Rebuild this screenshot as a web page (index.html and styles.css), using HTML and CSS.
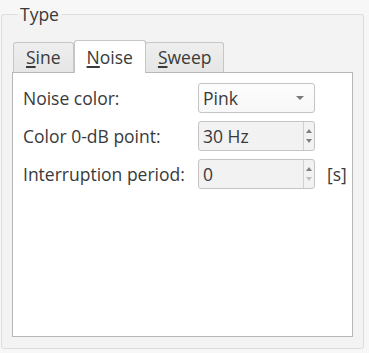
FILE: index.html
```html
<!DOCTYPE html>
<html lang="en">
<head>
    <meta charset="UTF-8">
    <title>Signal generator</title>
    <link rel="stylesheet" href="styles.css">
</head>
<body>
    <fieldset class="group">
        <legend class="group-title">Type</legend>

        <!-- tabs -->
        <div class="tab-bar">
            <div class="tab"><u>S</u>ine</div>
            <div class="tab tab-active"><u>N</u>oise</div>
            <div class="tab"><u>S</u>weep</div>
        </div>

        <div class="tab-pane">
            <div class="form">
                <label class="form-label">Noise color:</label>
                <div class="combo">
                    <span class="combo-text">Pink</span>
                    <span class="combo-arrow"></span>
                </div>
                <span></span>

                <label class="form-label">Color 0-dB point:</label>
                <div class="spin">
                    <span class="spin-text">30 Hz</span>
                    <span class="spin-buttons">
                        <span class="arrow-up"></span>
                        <span class="arrow-down"></span>
                    </span>
                </div>
                <span></span>

                <label class="form-label">Interruption period:</label>
                <div class="spin">
                    <span class="spin-text">0</span>
                    <span class="spin-buttons">
                        <span class="arrow-up"></span>
                        <span class="arrow-down disabled"></span>
                    </span>
                </div>
                <span class="unit">[s]</span>
            </div>
        </div>
    </fieldset>
</body>
</html>
```

FILE: styles.css
```css
body {
    margin: 0;
    background-color: #f7f7f7;
    font-family: "Open Sans", "Noto Sans", sans-serif;
    font-size: 17.5px;
    color: #3a3a3a;
}

.group {
    margin: 5px 0 0 1px;
    width: 363px;
    height: 344px;
    min-width: 0;
    box-sizing: border-box;
    padding: 15px 10px 12px 10px;
    border: 1px solid #dcdcdc;
    border-radius: 3px;
    background-color: #f3f3f3;
}

.group-title {
    margin-left: 6px;
    padding: 0 3px 0 2px;
    line-height: 19px;
}

.tab-bar {
    display: flex;
    align-items: flex-end;
    padding-left: 1px;
    height: 33px;
}

.tab {
    height: 29px;
    line-height: 28px;
    padding: 0 12px;
    border: 1px solid #c6c6c6;
    border-bottom: none;
    border-radius: 3px 3px 0 0;
    background: linear-gradient(#eeeeee, #e6e6e6);
}

.tab-active {
    height: 32px;
    line-height: 32px;
    background: #ffffff;
    position: relative;
    z-index: 1;
    margin-bottom: -1px;
}

.tab-active + .tab {
    margin-left: -1px;
}

.tab u {
    text-decoration-thickness: 2px;
    text-underline-offset: 2px;
}

.tab-pane {
    width: 341px;
    height: 265px;
    box-sizing: border-box;
    border: 1px solid #b7b7b7;
    background: #ffffff;
    padding: 10px 10px;
}

.form {
    display: grid;
    grid-template-columns: 175px 117px minmax(0, 1fr);
    grid-auto-rows: 30px;
    row-gap: 8px;
    align-items: center;
}

.form-label {
    white-space: nowrap;
}

.combo,
.spin {
    height: 30px;
    box-sizing: border-box;
    border: 1px solid #c4c4c4;
    border-radius: 3px;
    display: flex;
    align-items: center;
}

.combo {
    background: linear-gradient(#fdfdfd, #f7f7f7);
    justify-content: space-between;
    padding: 0 10px 0 4px;
}

.combo-arrow {
    width: 0;
    height: 0;
    border-left: 4px solid transparent;
    border-right: 4px solid transparent;
    border-top: 4px solid #7a7a7a;
}

.spin {
    background: #f2f2f2;
}

.spin-text {
    flex: 1;
    padding-left: 4px;
}

.spin-buttons {
    width: 10px;
    height: 100%;
    border-left: 1px solid #d0d0d0;
    display: flex;
    flex-direction: column;
    justify-content: center;
    align-items: center;
    gap: 6px;
}

.arrow-up {
    width: 0;
    height: 0;
    border-left: 3px solid transparent;
    border-right: 3px solid transparent;
    border-bottom: 4px solid #808080;
}

.arrow-down {
    width: 0;
    height: 0;
    border-left: 3px solid transparent;
    border-right: 3px solid transparent;
    border-top: 4px solid #808080;
}

.arrow-down.disabled {
    border-top-color: #c0c0c0;
}

.unit {
    padding-left: 12px;
    white-space: nowrap;
}
```
